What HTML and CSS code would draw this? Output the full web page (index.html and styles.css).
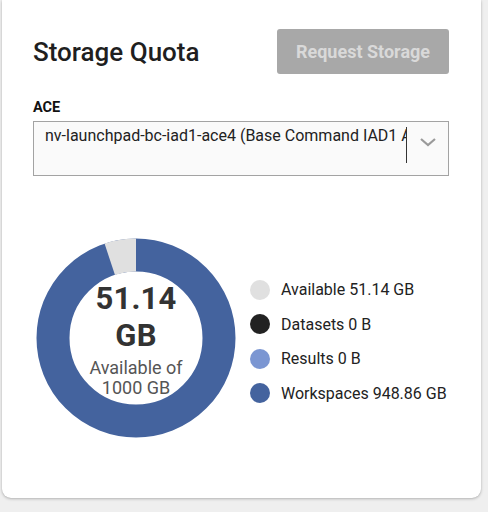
FILE: index.html
```html
<!DOCTYPE html>
<html>
<head>
<meta charset="utf-8">
<link rel="stylesheet" href="styles.css">
</head>
<body>
<div class="page">
  <div class="card">
    <div class="header">
      <h1 class="title">Storage Quota</h1>
      <button class="btn" disabled>Request Storage</button>
    </div>
    <div class="field">
      <div class="label">ACE</div>
      <div class="select">
        <div class="select-text">nv-launchpad-bc-iad1-ace4 (Base Command IAD1 ACE4)</div>
        <div class="select-sep"></div>
        <div class="select-arrow">
          <svg width="18" height="10" viewBox="0 0 18 10"><path d="M2 2 L9 8 L16 2" fill="none" stroke="#9a9a9a" stroke-width="2.2"/></svg>
        </div>
      </div>
    </div>
    <div class="chart-row">
      <div class="donut">
        <svg width="200" height="200" viewBox="0 0 200 200">
          <circle cx="100" cy="100" r="83" fill="none" stroke="#44639e" stroke-width="33"/>
          <path d="M100 17 A83 83 0 0 0 73.76 21.26" fill="none" stroke="#e0e0e0" stroke-width="33"/>
        </svg>
        <div class="donut-center">
          <div class="big">51.14<br>GB</div>
          <div class="sub">Available of<br>1000 GB</div>
        </div>
      </div>
      <ul class="legend">
        <li><span class="dot dot-avail"></span>Available 51.14 GB</li>
        <li><span class="dot dot-data"></span>Datasets 0 B</li>
        <li><span class="dot dot-res"></span>Results 0 B</li>
        <li><span class="dot dot-ws"></span>Workspaces 948.86 GB</li>
      </ul>
    </div>
  </div>
</div>
</body>
</html>
```
FILE: styles.css
```css
html, body {
  margin: 0;
  padding: 0;
  background: #efefef;
  font-family: Roboto, "Liberation Sans", sans-serif;
}
.page {
  width: 488px;
  height: 512px;
  box-sizing: border-box;
  padding: 0 7px 14px 2px;
  display: flex;
}
.card {
  flex: 1;
  min-width: 0;
  background: #fff;
  border-radius: 0 0 9px 9px;
  box-shadow: 0 1px 3px rgba(0,0,0,0.25), 0 0 1px rgba(0,0,0,0.15);
  padding: 29px 32px 0 31px;
  box-sizing: border-box;
}
.header {
  display: flex;
  justify-content: space-between;
  align-items: center;
}
.title {
  margin: 0;
  font-size: 26px;
  font-weight: 500;
  color: #1f1f1f;
}
.btn {
  width: 172px;
  height: 45px;
  border: none;
  border-radius: 3px;
  background: #a8a8a8;
  color: #d9d9d9;
  font-family: Roboto, "Liberation Sans", sans-serif;
  font-size: 18px;
  font-weight: 700;
  padding: 0;
}
.field {
  margin-top: 24px;
}
.label {
  font-size: 14.5px;
  font-weight: 700;
  color: #111;
  line-height: 20px;
}
.select {
  margin-top: 3px;
  height: 55px;
  box-sizing: border-box;
  border: 1px solid #a3a3a3;
  background: #fafafa;
  display: flex;
  align-items: flex-start;
}
.select-text {
  flex: 1;
  min-width: 0;
  overflow: hidden;
  white-space: nowrap;
  font-size: 16px;
  color: #222;
  padding: 5px 0 0 11px;
  line-height: 18px;
}
.select-sep {
  width: 1px;
  height: 36px;
  margin-top: 5px;
  background: #333;
}
.select-arrow {
  width: 41px;
  height: 40px;
  display: flex;
  align-items: center;
  justify-content: center;
}
.select-arrow svg { display: block; }
.chart-row {
  margin-top: 62px;
  display: flex;
  align-items: center;
}
.donut {
  position: relative;
  width: 200px;
  height: 200px;
  margin-left: 3px;
}
.donut svg { display: block; }
.donut-center {
  position: absolute;
  left: 0;
  top: 0;
  width: 200px;
  height: 200px;
  display: flex;
  flex-direction: column;
  align-items: center;
  justify-content: center;
  text-align: center;
  padding-top: 2px;
  box-sizing: border-box;
}
.big {
  font-size: 31px;
  font-weight: 700;
  color: #333;
  line-height: 37px;
  letter-spacing: 0.2px;
}
.sub {
  font-size: 18px;
  color: #555;
  line-height: 20px;
  margin-top: 4px;
}
.legend {
  list-style: none;
  margin: 7px 0 0 14px;
  padding: 0;
  display: flex;
  flex-direction: column;
  gap: 14.5px;
}
.legend li {
  display: flex;
  align-items: center;
  font-size: 16px;
  color: #222;
  height: 20px;
}
.dot {
  width: 20px;
  height: 20px;
  border-radius: 50%;
  margin-right: 11px;
  flex: none;
}
.dot-avail { background: #e0e0e0; }
.dot-data { background: #222; }
.dot-res { background: #7b96d2; }
.dot-ws { background: #44639e; }
```
